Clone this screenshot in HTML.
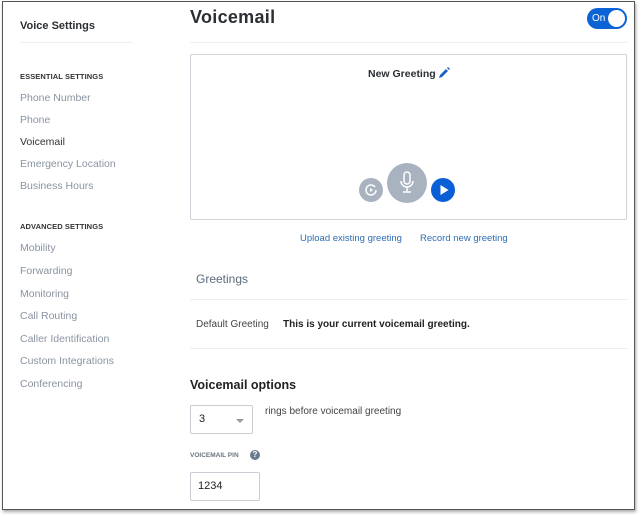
<!DOCTYPE html>
<html><head><style>
body{margin:0;width:643px;height:516px;background:#fff;font-family:"Liberation Sans",sans-serif;position:relative;overflow:hidden}
.frame{position:absolute;left:2px;top:1px;width:631px;height:507px;border:1px solid #555;box-shadow:1px 2px 3px rgba(0,0,0,.35)}
.a{position:absolute;white-space:nowrap}
.nav{font-size:10.5px;color:#8a94a0}
.hd{font-size:7.5px;font-weight:bold;color:#333;letter-spacing:.1px}
.hr{position:absolute;height:1px;background:#eceef0}
</style></head><body>
<div class="frame"></div>
<div class="a" style="left:20px;top:20px;font-size:11px;font-weight:bold;color:#2b2f33">Voice Settings</div>
<div class="hr" style="left:20px;top:42px;width:113px"></div>
<div class="a hd" style="left:20px;top:72px">ESSENTIAL SETTINGS</div>
<div class="a nav" style="left:20px;top:92px">Phone Number</div>
<div class="a nav" style="left:20px;top:114px">Phone</div>
<div class="a nav" style="left:20px;top:136px;color:#333">Voicemail</div>
<div class="a nav" style="left:20px;top:158px">Emergency Location</div>
<div class="a nav" style="left:20px;top:180px">Business Hours</div>
<div class="a hd" style="left:20px;top:222px">ADVANCED SETTINGS</div>
<div class="a nav" style="left:20px;top:242px">Mobility</div>
<div class="a nav" style="left:20px;top:265px">Forwarding</div>
<div class="a nav" style="left:20px;top:288px">Monitoring</div>
<div class="a nav" style="left:20px;top:310px">Call Routing</div>
<div class="a nav" style="left:20px;top:333px">Caller Identification</div>
<div class="a nav" style="left:20px;top:355px">Custom Integrations</div>
<div class="a nav" style="left:20px;top:378px">Conferencing</div>

<div class="a" style="left:190px;top:7px;font-size:18px;font-weight:bold;color:#2b2f33;letter-spacing:.3px">Voicemail</div>
<div class="a" style="left:587px;top:8px;width:40px;height:21px;border-radius:11px;background:#0b63d6">
 <span class="a" style="left:5px;top:5px;font-size:10px;color:#fff">On</span>
 <span class="a" style="left:21px;top:2px;width:17px;height:17px;border-radius:50%;background:#fff"></span></div>
<div class="hr" style="left:190px;top:42px;width:437px"></div>
<div class="a" style="left:190px;top:54px;width:435px;height:164px;border:1px solid #cfd4da;border-radius:2px"></div>
<div class="a" style="left:368px;top:68px;font-size:10.5px;font-weight:bold;color:#2b2f33">New Greeting</div>
<svg class="a" style="left:438px;top:67px" width="12" height="12" viewBox="0 0 12 12"><path d="M1 11l1-3 6-6 2 2-6 6z" fill="#1b5fc8"/><path d="M9 1l2 2 1-1-2-2z" fill="#1b5fc8"/></svg>
<div class="a" style="left:359px;top:178px;width:24px;height:24px;border-radius:50%;background:#a9b3bf"></div>
<svg class="a" style="left:364px;top:183px" width="14" height="14" viewBox="0 0 14 14"><path d="M11 4A5 5 0 1 0 12 7" stroke="#fff" stroke-width="1.5" fill="none"/><path d="M6 5l3 2-3 2z" fill="#fff"/></svg>
<div class="a" style="left:387px;top:163px;width:40px;height:40px;border-radius:50%;background:#a9b3bf"></div>
<svg class="a" style="left:397px;top:171px" width="20" height="24" viewBox="0 0 20 24"><rect x="7" y="1" width="6" height="12" rx="3" fill="none" stroke="#fff" stroke-width="1.5"/><path d="M4 10a6 6 0 0 0 12 0M10 16v4M6 21h8" stroke="#fff" stroke-width="1.5" fill="none"/></svg>
<div class="a" style="left:431px;top:178px;width:24px;height:24px;border-radius:50%;background:#0b5fd6"></div>
<svg class="a" style="left:431px;top:178px" width="24" height="24"><path d="M9.5 7l8 5-8 5z" fill="#fff"/></svg>
<div class="a" style="left:300px;top:233px;font-size:9.5px;color:#2f6db5">Upload existing greeting</div>
<div class="a" style="left:420px;top:233px;font-size:9.5px;color:#2f6db5">Record new greeting</div>
<div class="a" style="left:196px;top:272px;font-size:12px;color:#5d6b7b">Greetings</div>
<div class="hr" style="left:190px;top:299px;width:437px"></div>
<div class="a" style="left:196px;top:319px;font-size:10px;color:#444">Default Greeting</div>
<div class="a" style="left:283px;top:319px;font-size:10px;font-weight:bold;color:#222">This is your current voicemail greeting.</div>
<div class="hr" style="left:190px;top:348px;width:437px"></div>
<div class="a" style="left:190px;top:378px;font-size:12.5px;font-weight:bold;color:#222">Voicemail options</div>
<div class="a" style="left:190px;top:405px;width:61px;height:27px;border:1px solid #c9ced4;border-radius:2px"></div>
<div class="a" style="left:199px;top:413px;font-size:11px;color:#222">3</div>
<div class="a" style="left:236px;top:419px;width:0;height:0;border-left:4px solid transparent;border-right:4px solid transparent;border-top:4px solid #999"></div>
<div class="a" style="left:265px;top:406px;font-size:10px;color:#444">rings before voicemail greeting</div>
<div class="a" style="left:190px;top:452px;font-size:6.5px;font-weight:bold;color:#6a7480">VOICEMAIL PIN</div>
<div class="a" style="left:250px;top:450px;width:10px;height:10px;border-radius:50%;background:#6a7a90;color:#fff;font-size:8px;font-weight:bold;text-align:center;line-height:10px">?</div>
<div class="a" style="left:190px;top:472px;width:68px;height:27px;border:1px solid #c9ced4;border-radius:2px"></div>
<div class="a" style="left:198px;top:480px;font-size:11px;color:#222">1234</div>
</body></html>
